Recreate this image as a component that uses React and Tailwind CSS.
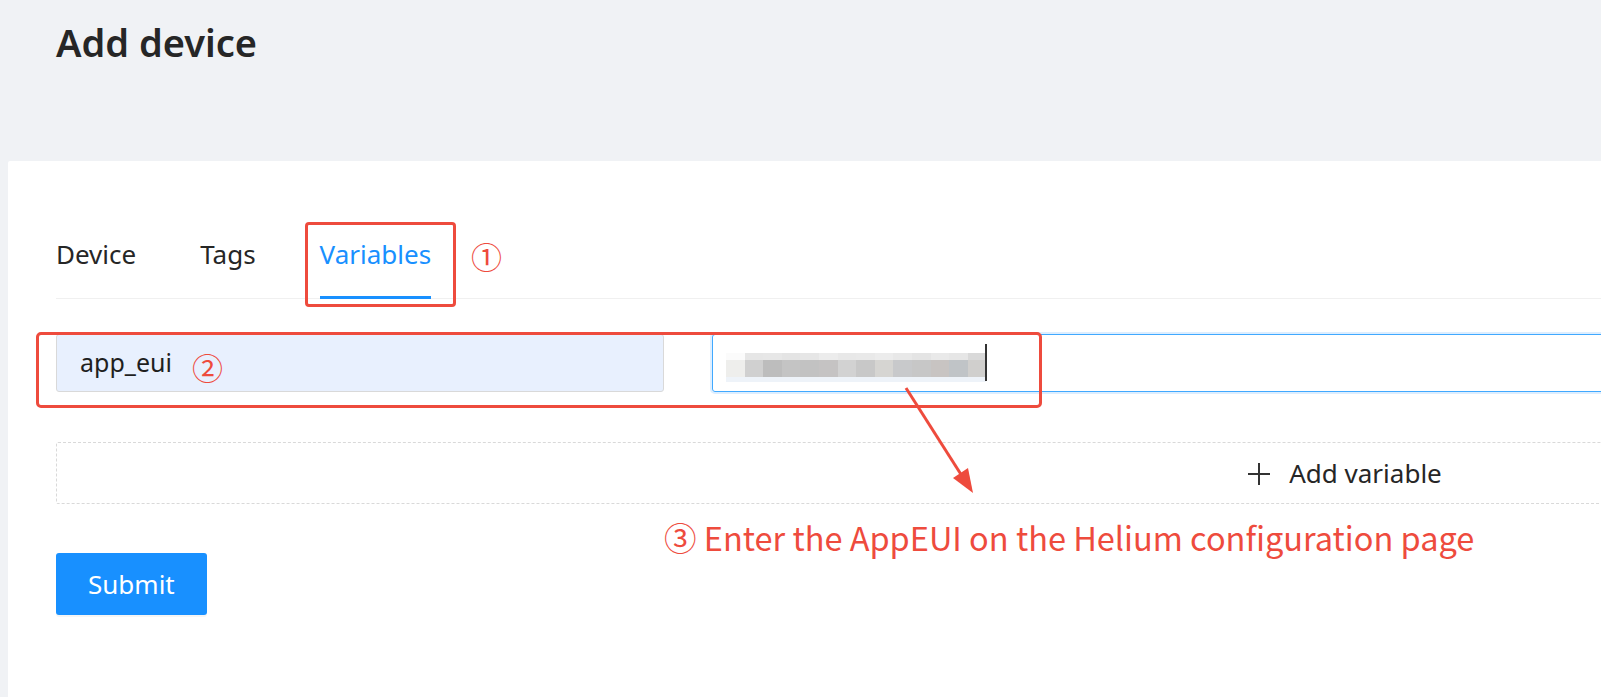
const RED = '#ee4b3d';

const mosaicTop = ['#fbfbfb', '#e6e6e6', '#e7e7e7', '#e4e4e4', '#e6e6e6', '#ececec', '#e8e8e8', '#e9e9e9', '#ececec', '#e8e8e8', '#e4e4e4', '#e9e9e9', '#e6e6e6', '#d9d9d9'];
const mosaicBottom = ['#eeeeec', '#d0d0d0', '#bdbdbd', '#c4c4c4', '#c2c2c2', '#c5c3c3', '#d2d2d2', '#c8c8c8', '#d6d5d2', '#c8c9cb', '#c7c7c7', '#c8c4c2', '#c0c4c7', '#d0cfcd'];

// blurred value inside the focused input
function Mosaic() {
  return (
    <div className="flex flex-col">
      <div className="flex h-[7px]">
        {mosaicTop.map((c, i) => (
          <div key={i} className="w-[18.6px] h-full" style={{ background: c }} />
        ))}
      </div>
      <div className="flex h-[17px]">
        {mosaicBottom.map((c, i) => (
          <div key={i} className="w-[18.6px] h-full" style={{ background: c }} />
        ))}
      </div>
      <div className="h-[5px] w-[260px] bg-[#eef3f9]" />
    </div>
  );
}

function Tab({ label, active, children }) {
  return (
    <div className="relative pb-[24px]">
      <span className={active ? 'text-[#1890ff]' : 'text-[#262626]'}>{label}</span>
      {active && <div className="absolute left-0 right-0 bottom-[-1px] h-[3px] bg-[#1890ff]" />}
      {children}
    </div>
  );
}

export default function App() {
  return (
    <div
      className="relative w-[1601px] h-[697px] overflow-hidden bg-[#f0f2f5]"
      style={{ fontFamily: '"Noto Sans", "Open Sans", sans-serif' }}
    >
      {/* Header */}
      <div className="h-[161px] pl-[56px]">
        <h1 className="pt-[16px] text-[38px] leading-[52px] font-semibold text-[#262626]">Add device</h1>
      </div>

      {/* Card */}
      <div className="ml-[8px] w-[2673px] h-[600px] bg-white rounded-tl-[2px] px-[48px] pt-[74px]">
        {/* Tabs */}
        <div className="flex items-start gap-[64px] border-b border-[#f0f0f0] text-[26px] leading-[39px]">
          <Tab label="Device" />
          <Tab label="Tags" />
          <div className="flex items-start">
            <Tab label="Variables" active>
              <div className="absolute left-[-15px] right-[-25px] top-[-13px] bottom-[-9px] border-[3px] border-[#ee4b3d] rounded-[4px]" />
            </Tab>
            <span
              className="ml-[40px] mt-[5px] text-[31px] leading-[31px] text-[#ee4b3d]"
              style={{ fontFamily: '"Noto Sans CJK SC", sans-serif' }}
            >
              ①
            </span>
          </div>
        </div>

        {/* Variable row */}
        <div className="relative mt-[35px] flex gap-[48px]">
          <div className="w-[608px] h-[58px] flex items-center pl-[23px] bg-[#e8f0fe] border border-[#d9d9d9] rounded-[3px] text-[25px] text-[#1f1f1f]">
            <span>app_eui</span>
            <span
              className="ml-[20px] mt-[6px] text-[31px] leading-[31px] text-[#ee4b3d]"
              style={{ fontFamily: '"Noto Sans CJK SC", sans-serif' }}
            >
              ②
            </span>
          </div>
          <div className="flex-1 h-[58px] flex items-center pl-[13px] border border-[#40a9ff] rounded-[3px] shadow-[0_0_0_2px_rgba(24,144,255,0.15)]">
            <div className="mt-[8px]">
              <Mosaic />
            </div>
            <div className="w-[2px] h-[37px] bg-[#333] ml-[-1px] mt-[-1px]" />
          </div>
        </div>

        {/* Add variable */}
        <div className="mt-[50px] h-[62px] border border-dashed border-[#d9d9d9] rounded-[2px] flex items-center justify-center gap-[18px] text-[26px] text-[#262626]">
          <svg width="24" height="24" viewBox="0 0 24 24" className="mt-[2px]">
            <path d="M12 1v22M1 12h22" stroke="#333" strokeWidth="2" fill="none" />
          </svg>
          <span>Add variable</span>
        </div>

        {/* Submit */}
        <button className="mt-[49px] h-[62px] px-[32px] bg-[#1890ff] rounded-[3px] text-white text-[26px] shadow-[0_2px_0_rgba(0,0,0,0.04)]">
          Submit
        </button>
      </div>

      {/* Annotations */}
      <div className="absolute left-[36px] top-[332px] w-[1006px] h-[76px] border-[3px] border-[#ee4b3d] rounded-[5px] pointer-events-none" />
      <svg className="absolute left-0 top-0 pointer-events-none" width="1601" height="697">
        <line x1="906" y1="388" x2="962" y2="476" stroke={RED} strokeWidth="3" />
        <polygon points="973,493 953,478 968,468" fill={RED} />
      </svg>
      <div
        className="absolute left-[664px] top-[520px] text-[32.5px] leading-[33px] whitespace-nowrap text-[#ee4b3d]"
        style={{ fontFamily: '"Noto Sans CJK SC", sans-serif' }}
      >
        ③ Enter the AppEUI on the Helium configuration page
      </div>
    </div>
  );
}
